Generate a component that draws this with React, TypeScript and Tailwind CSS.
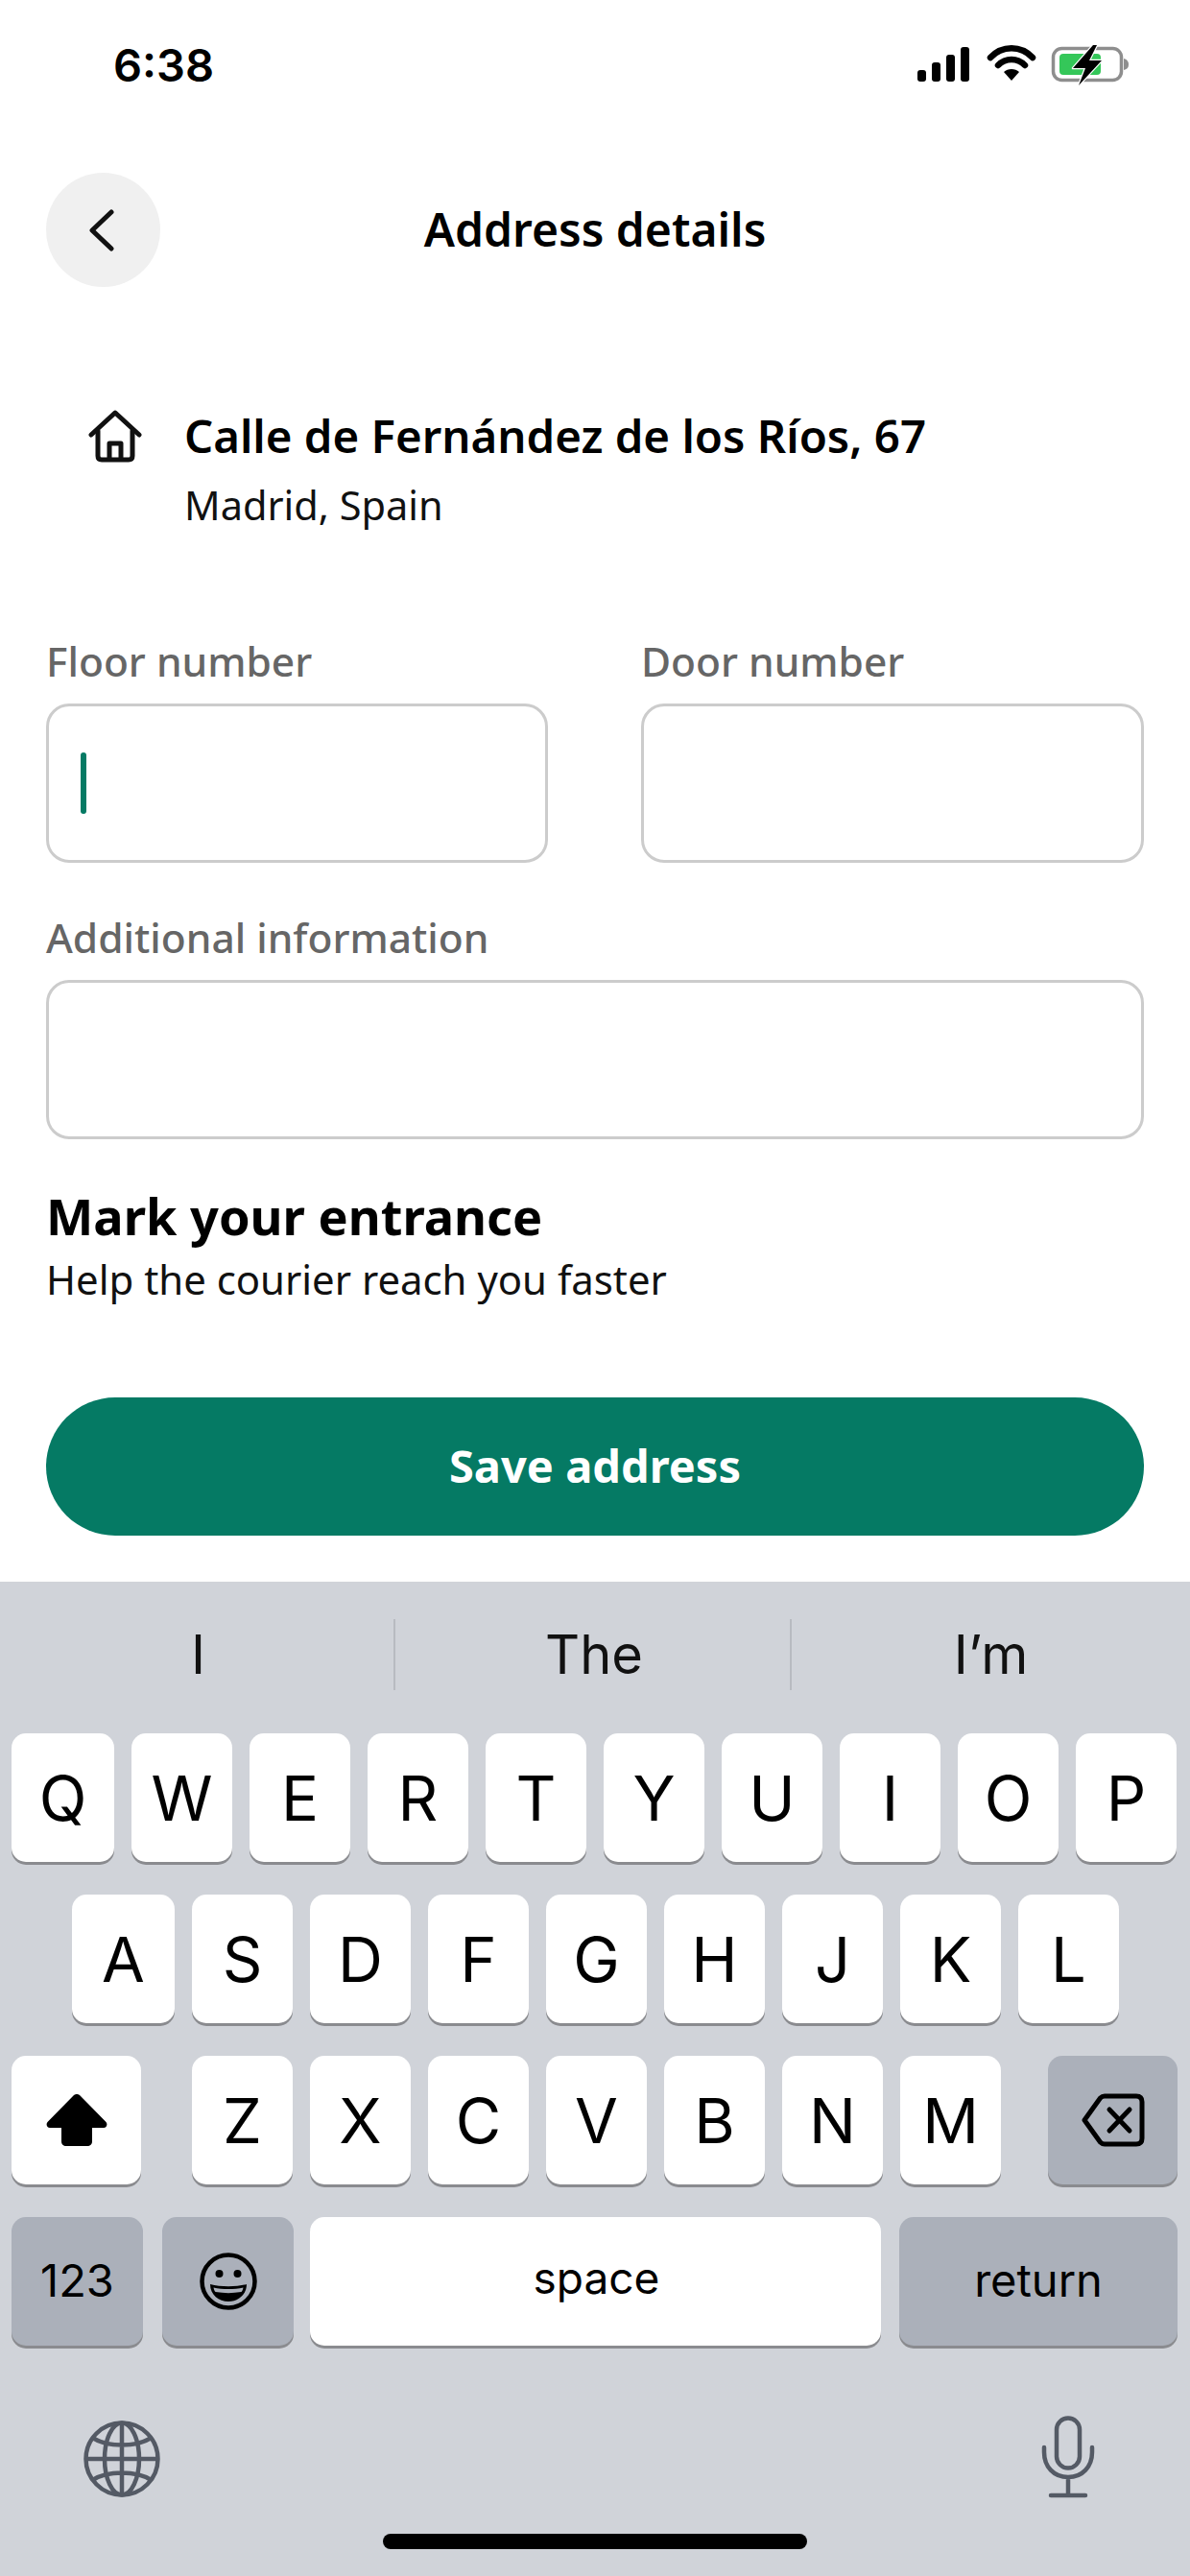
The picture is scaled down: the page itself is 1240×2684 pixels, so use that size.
import React from "react";

const ui = "font-['Noto_Sans','Liberation_Sans',sans-serif]";
const kb = "font-['Inter','Liberation_Sans',sans-serif]";

function Key({ w, dark, children, className = "" }: { w: string; dark?: boolean; children?: React.ReactNode; className?: string }) {
  return (
    <div
      className={`${w} h-[134px] shrink-0 rounded-[15px] flex items-center justify-center text-black shadow-[0_3px_0_#8a8b8f] ${
        dark ? "bg-[#abb0ba]" : "bg-white"
      } ${className}`}
    >
      {children}
    </div>
  );
}

function Letter({ k, w = "w-[105px]" }: { k: string; w?: string }) {
  return (
    <Key w={w}>
      <span className="text-[65px] leading-none font-normal">{k}</span>
    </Key>
  );
}

function Field({ label, cursor, className = "" }: { label: string; cursor?: boolean; className?: string }) {
  return (
    <div className={`flex flex-col ${className}`}>
      <div className="h-[42px] mb-[23px] text-[42.5px] leading-[42px] font-medium text-[#666666] whitespace-nowrap">{label}</div>
      <div className="h-[166px] rounded-[24px] border-[3px] border-[#cccccc] bg-white flex items-center pl-[33px]">
        {cursor && <div className="w-[6px] h-[64px] rounded-full bg-[#057a64]" />}
      </div>
    </div>
  );
}

export default function App() {
  return (
    <div className="w-[1240px] h-[2684px] bg-white flex flex-col overflow-hidden">
      <div className={`h-[1648px] shrink-0 ${ui}`}>
        {/* status bar */}
        <div className="h-[180px] pl-[118px] pr-[64px] flex items-start justify-between">
          <div className={`${kb} mt-[40px] text-[47px] leading-[56px] font-semibold text-black`}>6:38</div>
          <svg width="222" height="44" viewBox="0 0 222 44" className="mt-[46px]" fill="none">
            <rect x="2" y="27" width="9" height="12" rx="3" fill="#000" />
            <rect x="17" y="19" width="9" height="20" rx="3" fill="#000" />
            <rect x="32" y="11" width="9" height="28" rx="3" fill="#000" />
            <rect x="47" y="3" width="9" height="36" rx="3" fill="#000" />
            <path d="M78 14 C90 1 110 1 122 14" stroke="#000" strokeWidth="6.5" strokeLinecap="round" />
            <path d="M86 22 C94 14 106 14 114 22" stroke="#000" strokeWidth="6.5" strokeLinecap="round" />
            <path d="M92 29 C96 25 104 25 108 29 L100 38 Z" fill="#000" />
            <rect x="143.5" y="4.5" width="71" height="33" rx="9" stroke="#8e8e8e" strokeWidth="3.5" />
            <rect x="150" y="10" width="43" height="22" rx="4" fill="#34c759" />
            <path d="M217 15 C221 16 222 19 222 21 C222 24 221 26 217 27 Z" fill="#8e8e8e" />
            <path d="M185 1 L164 25 L177 25 L170 43 L194 17 L181 17 L189 1 Z" fill="#000" stroke="#fff" strokeWidth="2.5" strokeLinejoin="round" paintOrder="stroke" />
          </svg>
        </div>

        {/* header */}
        <div className="mx-[48px] h-[119px] grid grid-cols-[119px_1fr_119px] items-center">
          <div className="w-[119px] h-[119px] rounded-full bg-[#f0f0f0] flex items-center justify-center">
            <svg width="30" height="46" viewBox="0 0 30 46" fill="none" className="mr-[4px]">
              <path d="M25 4 L5 23 L25 42" stroke="#111" strokeWidth="5" strokeLinecap="round" strokeLinejoin="round" />
            </svg>
          </div>
          <div className="text-center text-[48px] leading-[60px] pb-[2px] font-semibold text-black">Address details</div>
          <div />
        </div>

        {/* address */}
        <div className="mt-[127px] pl-[92px] flex items-start">
          <svg width="56" height="56" viewBox="0 0 56 56" fill="none" className="mt-[1px] shrink-0">
            <path d="M3 26 L28 3 L53 26" stroke="#111" strokeWidth="5" strokeLinecap="round" strokeLinejoin="round" />
            <path d="M10 22 V48 C10 51 11.5 52 14 52 H42 C44.5 52 46 51 46 48 V22" stroke="#111" strokeWidth="5" strokeLinecap="round" />
            <path d="M22 52 V35 H34 V52" stroke="#111" strokeWidth="5" strokeLinejoin="round" />
          </svg>
          <div className="ml-[44px] flex flex-col">
            <div className="h-[56px] text-[47.4px] leading-[56px] font-semibold text-black whitespace-nowrap">Calle de Fernández de los Ríos, 67</div>
            <div className="mt-[16px] h-[56px] text-[41.5px] leading-[56px] text-[#111111] whitespace-nowrap">Madrid, Spain</div>
          </div>
        </div>

        {/* fields */}
        <div className="mt-[114px] px-[48px] flex flex-col">
          <div className="flex gap-[97px]">
            <Field label="Floor number" cursor className="w-[523px]" />
            <Field label="Door number" className="w-[524px]" />
          </div>
          <Field label="Additional information" className="mt-[57px] w-[1144px]" />
          <div className="mt-[50px] text-[52.3px] leading-[60px] font-bold text-black">Mark your entrance</div>
          <div className="mt-[10px] text-[41.9px] leading-[52px] text-[#111111]">Help the courier reach you faster</div>
        </div>

        {/* save */}
        <div className="mt-[97px] mx-[48px] h-[144px] rounded-[72px] bg-[#057a64] flex items-center justify-center pb-[2px] text-white text-[47px] font-bold">
          Save address
        </div>
      </div>

      {/* keyboard */}
      <div className={`flex-1 bg-[#d0d3d9] flex flex-col ${kb}`}>
        <div className="h-[158px] shrink-0 pt-[39px] flex text-[56px] text-[#111111]">
          <div className="w-[412px] h-[74px] flex items-center justify-center pl-[3px] border-r-2 border-[#b8bbc1]">I</div>
          <div className="w-[413px] h-[74px] flex items-center justify-center pl-[3px] border-r-2 border-[#b8bbc1]">The</div>
          <div className="flex-1 h-[74px] flex items-center justify-center">I’m</div>
        </div>

        <div className="flex flex-col gap-[34px]">
          <div className="pl-[12px] flex gap-[18px]">
            <Letter k="Q" w="w-[107px]" />
            {"WERTYUIOP".split("").map((k) => (
              <Letter key={k} k={k} />
            ))}
          </div>
          <div className="pl-[75px] flex gap-[18px]">
            <Letter k="A" w="w-[107px]" />
            {"SDFGHJKL".split("").map((k) => (
              <Letter key={k} k={k} />
            ))}
          </div>
          <div className="pl-[12px] flex">
            <Key w="w-[135px]" className="mr-[53px]">
              <svg width="64" height="56" viewBox="0 0 64 56" fill="#000">
                <path d="M32 1 C33.500 1 34.500 1.500 35.500 2.500 L62.500 30 C64.500 32.500 63 36 60 36 H48 V50 C48 53.500 46 55 43 55 H21 C18 55 16 53.500 16 50 V36 H4 C1 36 -0.500 32.500 1.500 30 L28.500 2.500 C29.500 1.500 30.500 1 32 1 Z" />
              </svg>
            </Key>
            <div className="flex gap-[18px]">
              {"ZXCVBNM".split("").map((k) => (
                <Letter key={k} k={k} />
              ))}
            </div>
            <Key w="w-[135px]" dark className="ml-[49px]">
              <svg width="66" height="56" viewBox="0 0 66 56" fill="none" stroke="#000" strokeWidth="5" strokeLinecap="round" strokeLinejoin="round">
                <path d="M24 3 H57 C61 3 63 5 63 9 V47 C63 51 61 53 57 53 H24 C22 53 21 52.500 19.500 51 L3 28 L19.500 5 C21 3.500 22 3 24 3 Z" />
                <path d="M29 17 L50 39 M50 17 L29 39" />
              </svg>
            </Key>
          </div>
          <div className="pl-[12px] flex">
            <Key w="w-[137px]" dark className="pb-[4px]">
              <span className="text-[47px] leading-none">123</span>
            </Key>
            <Key w="w-[137px]" dark className="ml-[20px]">
              <svg width="60" height="60" viewBox="0 0 60 60" fill="none">
                <circle cx="30" cy="30" r="27.500" stroke="#000" strokeWidth="4.500" />
                <circle cx="20.500" cy="22" r="4" fill="#000" />
                <circle cx="39.500" cy="22" r="4" fill="#000" />
                <path d="M11 33 C22 36 38 36 49 33 C49 44 40 51 30 51 C20 51 11 44 11 33 Z" fill="#000" />
                <path d="M14.500 36.500 C24 38.500 36 38.500 45.500 36.500 C45 38.500 44.500 40 43.500 41 C34 42.500 26 42.500 16.500 41 C15.500 40 15 38.500 14.500 36.500 Z" fill="#abb0ba" />
              </svg>
            </Key>
            <Key w="w-[595px]" className="ml-[17px] pb-[9px] pl-[2px]">
              <span className="text-[46px] leading-none">space</span>
            </Key>
            <Key w="w-[290px]" dark className="ml-[19px] pb-[3px]">
              <span className="text-[47px] leading-none">return</span>
            </Key>
          </div>
        </div>

        <div className="mt-[70px] pl-[87px] pr-[99px] flex items-start justify-between">
          <svg width="80" height="80" viewBox="0 0 80 80" fill="none" stroke="#545a65" strokeWidth="4.500" className="mt-[8px]">
            <circle cx="40" cy="40" r="37.500" />
            <ellipse cx="40" cy="40" rx="18" ry="37.500" />
            <path d="M40 2.500 V77.500 M2.500 40 H77.500 M9.500 18 C25 28 55 28 70.500 18 M9.500 62 C25 52 55 52 70.500 62" />
          </svg>
          <svg width="56" height="86" viewBox="0 0 56 86" fill="none" stroke="#545a65" strokeWidth="4.500" strokeLinecap="round" className="mt-[3px]">
            <rect x="16" y="2.500" width="24" height="52" rx="12" />
            <path d="M3 33 V38 C3 53 13 64 28 64 C43 64 53 53 53 38 V33 M28 64 V83 M10 83 H46" />
          </svg>
        </div>

        <div className="mt-[37px] mx-auto w-[442px] h-[16px] rounded-full bg-black shrink-0" />
      </div>
    </div>
  );
}
